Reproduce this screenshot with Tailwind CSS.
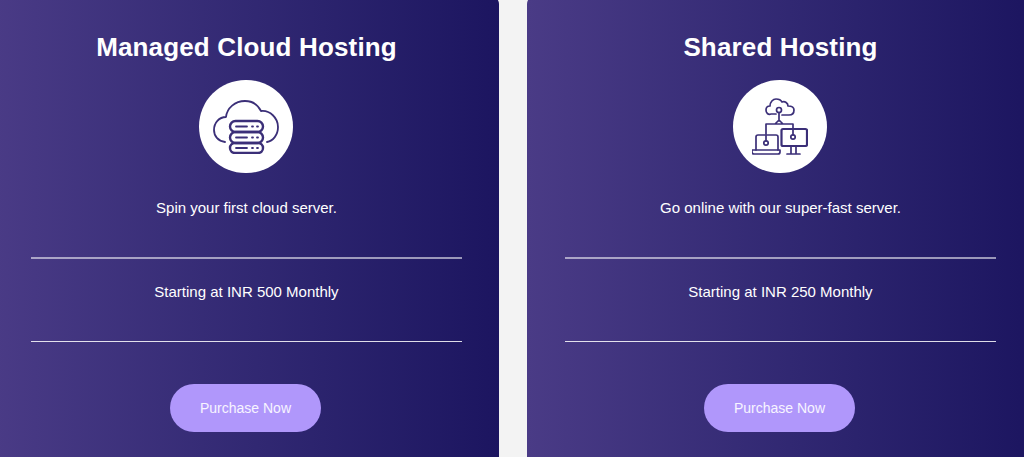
<!DOCTYPE html>
<html lang="en">
  <head>
    <meta charset="UTF-8" />
    <title>Hosting Plans</title>
    <script src="https://cdn.jsdelivr.net/npm/@tailwindcss/browser@4"></script>
  </head>
  <body class="h-[457px] overflow-hidden bg-[#f3f3f3] font-['Liberation_Sans',Arial,sans-serif] text-white">
    <div class="flex w-[1042px] gap-[28px] ml-[-6px] mt-[-4px]">
      <!-- managed cloud card -->
      <section class="w-[505px] h-[480px] shrink-0 rounded-[8px] px-[37px] pt-[36px] text-center bg-gradient-to-r from-[#4a3b86] to-[#1c1560]">
        <h2 class="text-[26px] tracking-[0.15px] leading-[30px] font-bold">Managed Cloud Hosting</h2>
        <div class="ml-[168px] mt-[18px] w-[94px] h-[93px] rounded-full bg-white flex items-center justify-center">
          <svg width="66" height="54" viewBox="0 0 66 54" fill="none" stroke="#3b2f78" stroke-width="1.800" stroke-linecap="round" stroke-linejoin="round">
            <path d="M12 42C5 41 1 36 1 30C1 23 6 17 13 17C14 8 22 1 32 1C39 1 45 5 48 11C57 10 65 18 65 27C65 35 60 41 54 42" />
            <rect x="17" y="21" width="33" height="11" rx="5.500" stroke-width="2.400" />
            <rect x="17" y="32" width="33" height="11" rx="5.500" stroke-width="2.400" />
            <rect x="17" y="43" width="33" height="10" rx="5" stroke-width="2.400" />
            <path d="M23 26.500H34M23 37.500H34M23 48H34M39 26.500H40M44 26.500H45M39 37.500H40M44 37.500H45M39 48H40M44 48H45" />
          </svg>
        </div>
        <p class="mt-[26px] text-[15px] leading-[18px]">Spin your first cloud server.</p>
        <hr class="mt-[40px] border-0 h-[2px] bg-white/55" />
        <p class="mt-[24px] text-[15px] leading-[18px]">Starting at INR 500 Monthly</p>
        <hr class="mt-[40px] border-0 h-[1px] bg-white/85" />
        <button class="block ml-[139px] mt-[42px] w-[151px] h-[48px] rounded-[24px] bg-[#b097fb] text-[14px] text-white/90">Purchase Now</button>
      </section>

      <!-- shared hosting card -->
      <section class="w-[505px] h-[480px] shrink-0 rounded-[8px] pl-[38px] pr-[36px] pt-[36px] text-center bg-gradient-to-r from-[#4a3b86] to-[#1c1560]">
        <h2 class="text-[26px] tracking-[0.15px] leading-[30px] font-bold">Shared Hosting</h2>
        <div class="ml-[168px] mt-[18px] w-[94px] h-[93px] rounded-full bg-white flex items-center justify-center">
          <svg width="56" height="58" viewBox="0 0 56 58" fill="none" stroke="#3b2f78" stroke-width="1.700" stroke-linecap="round" stroke-linejoin="round">
            <path d="M24 16H19C16 17 14 15 14 12C14 10 15 8 18 8C18 4 21 1 24 1C27 1 29 2 30 4C33 3 36 5 36 8C40 8 42 10 42 12C42 15 40 17 37 17H30" />
            <circle cx="27" cy="12" r="2.500" />
            <path d="M27 14.500V23M23 26L27 22L31 26ZM23 26H14V43M31 26H41V37" />
            <path d="M4 52V39C4 38 5 37 6 37H13M15 37H24C25 37 26 38 26 39V52" />
            <path d="M0 52H28V54C28 55 27 56 26 56H2C1 56 0 55 0 54Z" />
            <circle cx="14" cy="45" r="2.200" />
            <rect x="29.500" y="31" width="25.500" height="17" rx="1.500" stroke-width="2.200" />
            <circle cx="41" cy="39" r="2.200" />
            <path d="M39 48V55M44 48V55M35 56H48" />
          </svg>
        </div>
        <p class="mt-[26px] text-[15px] leading-[18px]">Go online with our super-fast server.</p>
        <hr class="mt-[40px] border-0 h-[2px] bg-white/55" />
        <p class="mt-[24px] text-[15px] leading-[18px]">Starting at INR 250 Monthly</p>
        <hr class="mt-[40px] border-0 h-[1px] bg-white/85" />
        <button class="block ml-[139px] mt-[42px] w-[151px] h-[48px] rounded-[24px] bg-[#b097fb] text-[14px] text-white/90">Purchase Now</button>
      </section>
    </div>
  </body>
</html>
